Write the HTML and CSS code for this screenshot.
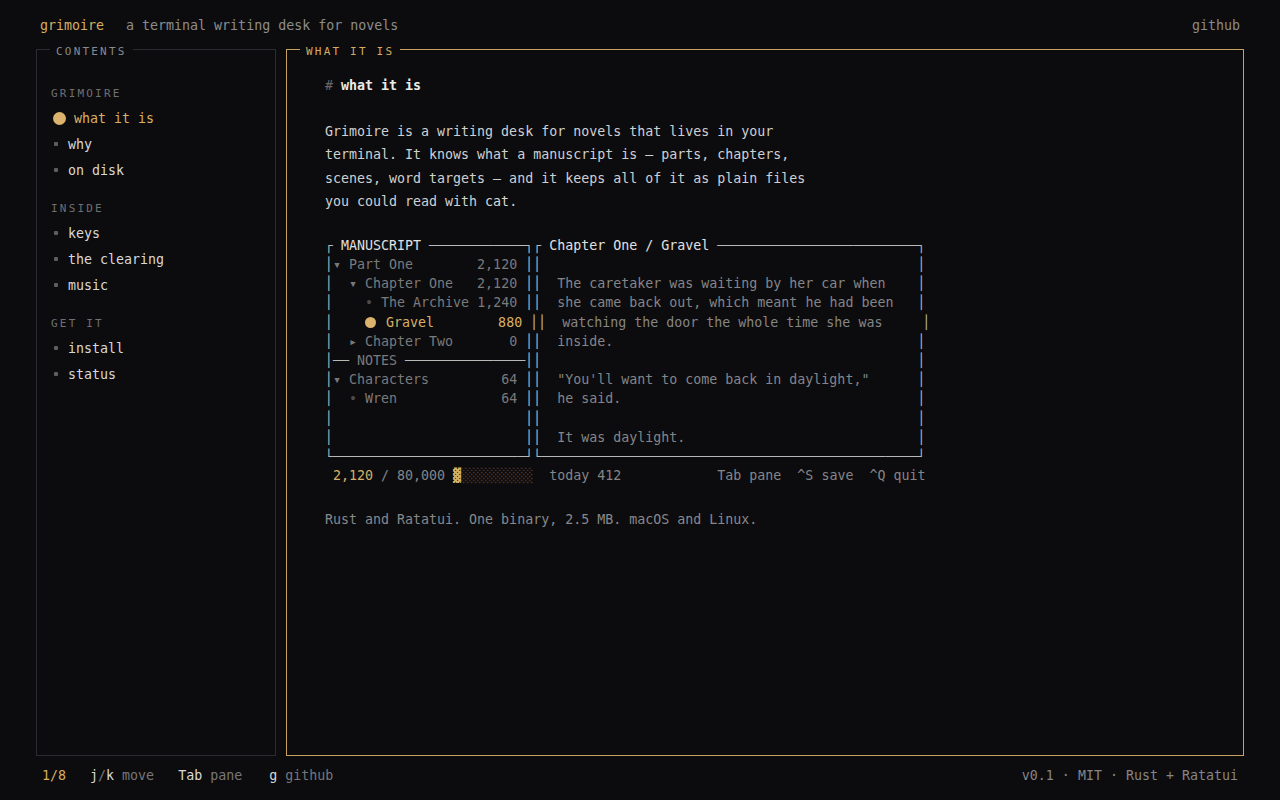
FILE: index.html
```html
<!DOCTYPE html>
<html lang="en">
<head>
<meta charset="utf-8">
<title>grimoire</title>
<link rel="stylesheet" href="styles.css">
</head>
<body>
<div class="app">
  <header class="top">
    <div class="brand"><span class="name">grimoire</span><span class="tag">a terminal writing desk for novels</span></div>
    <a class="gh">github</a>
  </header>

  <div class="body">
    <fieldset class="panel side">
      <legend>CONTENTS</legend>
      <nav class="toc">
        <section class="grp">
          <h3>GRIMOIRE</h3>
          <ul>
            <li class="on"><span class="b"></span>what it is</li>
            <li><span class="b"></span>why</li>
            <li><span class="b"></span>on disk</li>
          </ul>
        </section>
        <section class="grp">
          <h3>INSIDE</h3>
          <ul>
            <li><span class="b"></span>keys</li>
            <li><span class="b"></span>the clearing</li>
            <li><span class="b"></span>music</li>
          </ul>
        </section>
        <section class="grp">
          <h3>GET IT</h3>
          <ul>
            <li><span class="b"></span>install</li>
            <li><span class="b"></span>status</li>
          </ul>
        </section>
      </nav>
    </fieldset>

    <fieldset class="panel main">
      <legend>WHAT IT IS</legend>
      <div class="doc">
        <h1><span class="hash">#</span> what it is</h1>
        <p class="lead">Grimoire is a writing desk for novels that lives in your terminal. It knows what a manuscript is — parts, chapters, scenes, word targets — and it keeps all of it as plain files you could read with <code>cat</code>.</p>
<pre class="term">┌ <span class="t-h">MANUSCRIPT</span> ────────────┐┌ <span class="t-h">Chapter One / Gravel</span> ─────────────────────────┐
│<span class="t-d">▾ Part One        2,120</span> ││                                               │
│<span class="t-d">  ▾ Chapter One   2,120</span> ││<span class="t-p">  The caretaker was waiting by her car when    </span>│
│<span class="t-d">    <span class="t-s">•</span> The Archive 1,240</span> ││<span class="t-p">  she came back out, which meant he had been   </span>│
│    <span class="cur"></span> <span class="t-g">Gravel        880</span> ││<span class="t-p">  watching the door the whole time she was     </span>│
│<span class="t-d">  ▸ Chapter Two       0</span> ││<span class="t-p">  inside.                                      </span>│
│── <span class="t-d">NOTES</span> ───────────────││                                               │
│<span class="t-d">▾ Characters         64</span> ││<span class="t-p">  "You'll want to come back in daylight,"      </span>│
│<span class="t-d">  <span class="t-s">•</span> Wren             64</span> ││<span class="t-p">  he said.                                     </span>│
│                        ││                                               │
│                        ││<span class="t-p">  It was daylight.                             </span>│
└────────────────────────┘└───────────────────────────────────────────────┘
 <span class="t-g">2,120</span><span class="t-p"> / 80,000 </span><span class="t-g">▓</span><span class="t-s">░░░░░░░░░</span><span class="t-p">  today 412            Tab pane  ^S save  ^Q quit</span></pre>
        <p class="note">Rust and Ratatui. One binary, 2.5 MB. macOS and Linux.</p>
      </div>
    </fieldset>
  </div>

  <footer class="bottom">
    <div class="keys">
      <span class="pos">1/8</span>
      <span class="key"><b>j</b><i>/</i><b>k</b> <i>move</i></span>
      <span class="key"><b>Tab</b> <i>pane</i></span>
      <span class="key last"><b>g</b> <i>github</i></span>
    </div>
    <div class="ver">v0.1 · MIT · Rust + Ratatui</div>
  </footer>
</div>
</body>
</html>
```

FILE: styles.css
```css
* { box-sizing: border-box; }

html, body {
  margin: 0;
  padding: 0;
  background: #0c0c0e;
}

body {
  font-family: "DejaVu Sans Mono", "Liberation Mono", monospace;
  font-size: 13.3px;
  color: #d6d6d6;
}

.app {
  height: 800px;
  display: grid;
  grid-template-rows: 43px 1fr 44px;
}

/* header */
.top {
  display: flex;
  justify-content: space-between;
  padding: 15px 40px 0;
  line-height: 22px;
}
.brand { display: flex; gap: 22px; }
.name { color: #d6ad62; }
.tag { color: #8c8c8c; }
.gh { color: #8a8a8a; text-decoration: none; }

/* body columns */
.body {
  display: grid;
  grid-template-columns: 240px 1fr;
  gap: 10px;
  padding: 0 36px;
  min-height: 0;
}

.panel {
  margin: 0;
  padding: 0;
  min-width: 0;
  height: 100%;
  border: 1px solid #2b2b30;
}
.panel legend {
  margin-left: 13px;
  padding: 2px 6px 0;
  height: 13px;
  font-size: 11px;
  line-height: 13px;
  letter-spacing: 2.2px;
  color: #8a8a8c;
}
.panel.main { border-color: #c6a262; }
.panel.main legend { color: #d4ab60; }

/* sidebar */
.toc { padding: 31px 14px 0; }
.grp + .grp { margin-top: 18px; }
.grp h3 {
  margin: 0 0 5px;
  font-size: 11px;
  font-weight: normal;
  line-height: 14px;
  letter-spacing: 2.2px;
  color: #6f6f73;
}
.grp ul { list-style: none; margin: 0; padding: 0 0 0 2px; }
.grp li {
  line-height: 26px;
  color: #d8d8d8;
}
.grp li .b {
  display: inline-block;
  width: 4px;
  height: 4px;
  border-radius: 1px;
  background: #5e5e62;
  margin: 0 10px 0 1px;
  vertical-align: 3px;
}
.grp li.on { color: #d9b065; }
.grp li.on .b {
  width: 13px;
  height: 13px;
  border-radius: 50%;
  background: #dcb36c;
  margin: 0 8px 0 0;
  vertical-align: -2px;
}

/* main document */
.doc { padding: 18px 38px 0; }
.doc h1 {
  margin: 0;
  font-size: 13.3px;
  line-height: 23.3px;
  font-weight: bold;
  color: #ecebe6;
}
.hash { color: #66666a; font-weight: normal; }
.lead {
  margin: 22.7px 0 0;
  max-width: 62ch;
  line-height: 23.3px;
  color: #d0d0d0;
}
.lead code { font-family: inherit; font-size: inherit; color: #d8d8d8; }

.term {
  margin: 22.7px 0 0;
  font-family: inherit;
  font-size: 13.3px;
  line-height: 19.2px;
  color: #b9b9b9;
}
.t-h { color: #e0e0e0; }
.t-d { color: #7a7a7c; }
.t-p { color: #858587; }
.t-g { color: #d8b067; }
.t-s { color: #4c4c50; }
.cur {
  display: inline-block;
  width: 11px;
  height: 11px;
  border-radius: 50%;
  background: #dcb36c;
  margin-right: 2px;
  vertical-align: -1px;
}

.note {
  margin: 22.3px 0 0;
  line-height: 23.3px;
  color: #88888a;
}

/* footer */
.bottom {
  display: flex;
  justify-content: space-between;
  padding: 9px 42px 0;
  line-height: 22px;
}
.keys { display: flex; gap: 24px; }
.key.last { margin-left: 3px; }
.pos { color: #d6ad62; }
.key b { font-weight: normal; color: #d8d8d8; }
.key i { font-style: normal; color: #767678; }
.ver { color: #858587; }
```
